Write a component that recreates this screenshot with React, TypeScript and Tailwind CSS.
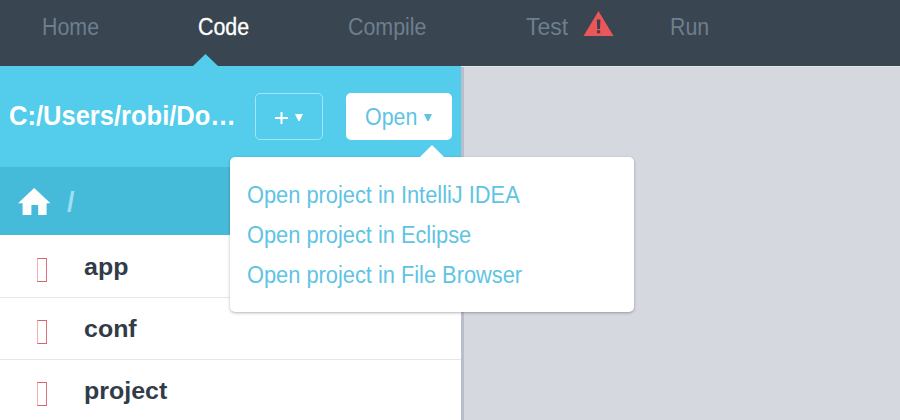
const narrow = "inline-block origin-left scale-x-[0.93] whitespace-nowrap";
const menuText = "inline-block origin-left scale-x-[0.948] whitespace-nowrap";

const tabs = [
  { label: "Home", width: "w-[156px]", color: "text-[#6d7f8e]" },
  { label: "Code", width: "w-[150px]", color: "text-white [-webkit-text-stroke:0.3px_white]" },
  { label: "Compile", width: "w-[178px]", color: "text-[#6d7f8e]" },
  { label: "Test", width: "w-[144px]", color: "text-[#6d7f8e]" },
  { label: "Run", width: "w-[100px]", color: "text-[#6d7f8e]" },
];

function Caret() {
  return (
    <svg className="h-[7px] w-[8px]" viewBox="0 0 8 7" fill="currentColor">
      <path d="M0 0H8L4.6 7H3.4Z" />
    </svg>
  );
}

function Warning() {
  return (
    <svg className="absolute left-[57px] top-[11px] h-[26px] w-[31px]" viewBox="0 0 31 26">
      <path d="M15.5 0L30.5 25H0.5Z" fill="#ea575b" />
      <path d="M13.8 8.5H17.4L17 18H14.2ZM14 19.3H17.2V22.3H14Z" fill="#42404b" />
    </svg>
  );
}

function HomeIcon() {
  return (
    <svg className="ml-[18px] h-[27px] w-[33px]" viewBox="0 0 33 27" fill="white">
      <path d="M16.2 0L32.5 15.3H28.6V27H20.2V17H13.4V27H4.6V15.3H0Z" />
    </svg>
  );
}

function Folder({ name }: { name: string }) {
  return (
    <li className="flex h-[62px] border-b border-[#e4e6e8]">
      <span className="ml-[37px] mt-[22px] h-[24px] w-[10px] border border-x-[#f0b0b3] border-y-[#dc626c] border-r-[#dc707b]" />
      <span className="ml-[37px] mt-[17px] inline-block origin-left scale-x-[1.04] self-start text-[24px] font-bold leading-[28px] text-[#323b48]">
        {name}
      </span>
    </li>
  );
}

export default function App() {
  return (
    <div className="relative flex h-[420px] w-[900px] flex-col overflow-hidden bg-[#d5d8df] font-['Liberation_Sans',Arial,sans-serif]">
      <nav className="relative flex h-[66px] shrink-0 bg-[#394550] pl-[42px]">
        {tabs.map((tab) => (
          <div key={tab.label} className={`relative ${tab.width} ${tab.color} pt-[13px] text-[23px] leading-[28px]`}>
            <span className={tab.label === "Test" ? "inline-block origin-left whitespace-nowrap" : narrow}>{tab.label}</span>
            {tab.label === "Test" && <Warning />}
          </div>
        ))}
        <svg className="absolute bottom-0 left-[193px] h-[12px] w-[25px]" viewBox="0 0 25 12">
          <path d="M12.5 0L25 12H0Z" fill="#53cdeb" />
        </svg>
      </nav>
      <main className="flex min-h-0 flex-1 border-t border-[#e2e5e9]">
        <aside className="-mt-px flex w-[461px] shrink-0 flex-col bg-white">
          <header className="flex h-[101px] shrink-0 bg-[#53cdeb] text-white">
            <h1 className="ml-[9px] w-[246px] pt-[34px] text-[27px] font-bold leading-[32px]">
              <span className="inline-block origin-left scale-x-[0.945] whitespace-nowrap">C:/Users/robi/Do…</span>
            </h1>
            <button className="mt-[27px] flex h-[47px] w-[68px] items-center justify-center gap-[7px] rounded-[5px] border-[1.5px] border-[#a2e5f5] pt-[2px] text-[23px]">
              <svg className="h-[12px] w-[13px]" viewBox="0 0 13 12" stroke="currentColor" strokeWidth="2">
                <path d="M6.5 0V12M0 6H13" />
              </svg>
              <Caret />
            </button>
            <button className="ml-[23px] mt-[27px] flex h-[47px] w-[106px] items-center rounded-[5px] bg-white pl-[19px] pt-[1px] text-[23px] leading-[28px] text-[#5fc4e3]">
              <span className={`${narrow} w-[59px] text-left`}>Open</span>
              <Caret />
            </button>
          </header>
          <div className="flex h-[68px] shrink-0 items-center bg-[#46bad9]">
            <HomeIcon />
            <span className="ml-[16px] mt-[2px] text-[27px] font-bold leading-[28px] text-[#9ce0f3]">/</span>
          </div>
          <ul className="pt-px">
            <Folder name="app" />
            <Folder name="conf" />
            <Folder name="project" />
          </ul>
        </aside>
        <div className="w-[3px] bg-[#b9bfca]" />
      </main>
      <div className="absolute left-[230px] top-[157px] flex h-[155px] w-[404px] flex-col rounded-[5px] bg-white pl-[17px] pt-[18px] text-[23px] leading-[40px] text-[#5fc4e3] shadow-[0_1px_3px_rgba(0,0,0,0.3)]">
        <svg className="absolute -top-[12px] left-[189px] h-[13px] w-[26px]" viewBox="0 0 26 13">
          <path d="M13 0L26 13H0Z" fill="white" />
        </svg>
        <span className={menuText}>Open project in IntelliJ IDEA</span>
        <span className={menuText}>Open project in Eclipse</span>
        <span className={menuText}>Open project in File Browser</span>
      </div>
    </div>
  );
}
